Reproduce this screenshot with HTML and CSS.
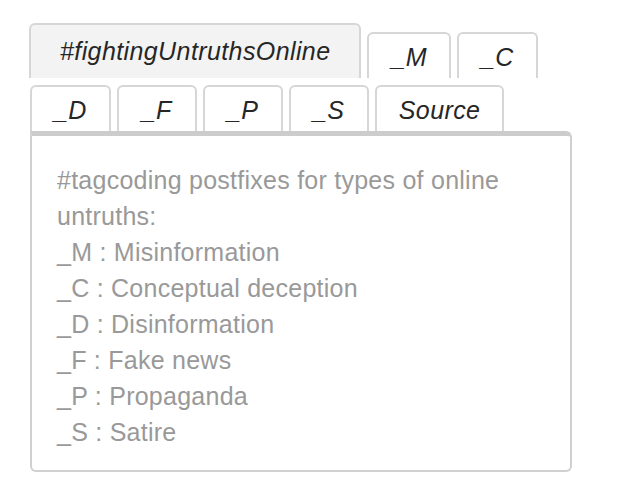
FILE: index.html
```html
<!DOCTYPE html>
<html>
<head>
<meta charset="utf-8">
<link rel="stylesheet" href="styles.css">
</head>
<body>
<div class="widget">
  <ul class="tabs">
    <li class="tab active">#fightingUntruthsOnline</li>
    <li class="tab">_M</li>
    <li class="tab">_C</li>
    <li class="tab">_D</li>
    <li class="tab">_F</li>
    <li class="tab">_P</li>
    <li class="tab">_S</li>
    <li class="tab">Source</li>
  </ul>
  <div class="panel">
    <p class="content">#tagcoding postfixes for types of online untruths:<br>_M : Misinformation<br>_C : Conceptual deception<br>_D : Disinformation<br>_F : Fake news<br>_P : Propaganda<br>_S : Satire</p>
  </div>
</div>
</body>
</html>
```
FILE: styles.css
```css
html, body {
  margin: 0;
  padding: 0;
  background: #ffffff;
}
body {
  padding: 23px 0 0 30px;
  font-family: "Liberation Sans", Arial, sans-serif;
}
.widget {
  width: 542px;
}
.tabs {
  list-style: none;
  margin: 0;
  padding: 0;
  display: flex;
  flex-wrap: wrap;
  align-items: flex-end;
  column-gap: 6px;
  row-gap: 7px;
}
.tab {
  box-sizing: border-box;
  height: 46px;
  min-width: 80px;
  padding: 2px 22px 0;
  border: 2px solid #d6d6d6;
  border-bottom: none;
  border-radius: 6px 6px 0 0;
  font-style: italic;
  font-size: 25px;
  letter-spacing: 0.4px;
  color: #262626;
  display: flex;
  align-items: center;
  justify-content: center;
}
.tab.active {
  height: 55px;
  padding: 0 29px 1px;
  background: #f3f3f3;
  margin-left: -1px;
}
.panel {
  box-sizing: border-box;
  border: 2px solid #d0d0d0;
  border-top: 5px solid #cccccc;
  border-radius: 0 6px 6px 6px;
  height: 341px;
  padding: 26px 20px 0 25px;
}
.content {
  margin: 0;
  font-size: 25px;
  letter-spacing: 0.25px;
  line-height: 36px;
  color: #999999;
}
```
